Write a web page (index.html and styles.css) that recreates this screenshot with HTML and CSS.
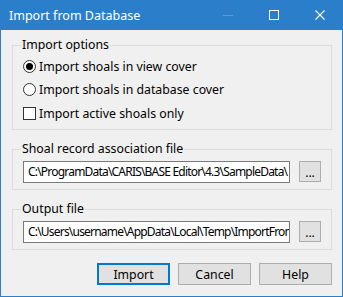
FILE: index.html
```html
<!DOCTYPE html>
<html lang="en">
<head>
    <meta charset="UTF-8">
    <title>Import from Database</title>
    <link rel="stylesheet" href="styles.css">
</head>
<body>
    <div class="window">
        <div class="titlebar">
            <span class="title">Import from Database</span>
            <div class="caption">
                <span class="cap-btn">
                    <svg width="10" height="10" viewBox="0 0 10 10"><line x1="0" y1="5.5" x2="10" y2="5.5" stroke="#5e9bd6" stroke-width="1"/></svg>
                </span>
                <span class="cap-btn">
                    <svg width="10" height="10" viewBox="0 0 10 10"><rect x="0.5" y="0.5" width="9" height="9" fill="none" stroke="#fff" stroke-width="1"/></svg>
                </span>
                <span class="cap-btn">
                    <svg width="10" height="10" viewBox="0 0 10 10"><path d="M0.5 0.5 L9.5 9.5 M9.5 0.5 L0.5 9.5" stroke="#fff" stroke-width="1.1"/></svg>
                </span>
            </div>
        </div>
        <div class="content">
            <fieldset class="group group-options">
                <legend>Import options</legend>
                <label class="option"><span class="radio checked"></span>Import shoals in view cover</label>
                <label class="option"><span class="radio"></span>Import shoals in database cover</label>
                <label class="option check-row"><span class="check"></span>Import active shoals only</label>
            </fieldset>
            <fieldset class="group">
                <legend>Shoal record association file</legend>
                <div class="file-row">
                    <div class="textbox"><span>C:\ProgramData\CARIS\BASE Editor\4.3\SampleData\</span></div>
                    <button class="browse">...</button>
                </div>
            </fieldset>
            <fieldset class="group">
                <legend>Output file</legend>
                <div class="file-row">
                    <div class="textbox"><span>C:\Users\username\AppData\Local\Temp\ImportFrom</span></div>
                    <button class="browse">...</button>
                </div>
            </fieldset>
            <div class="actions">
                <button class="btn default">Import</button>
                <button class="btn">Cancel</button>
                <button class="btn">Help</button>
            </div>
        </div>
    </div>
</body>
</html>
```

FILE: styles.css
```css
:root {
    --accent: #2b7fca;
    --face: #f0f0f0;
    --btn-face: #e1e1e1;
    --btn-border: #adadad;
    --frame: #dcdcdc;
}
* {
    box-sizing: border-box;
}
body {
    margin: 0;
    font-family: 'Noto Sans', sans-serif;
    font-size: 12.3px;
    color: #000;
    background: #fff;
}
.window {
    width: 343px;
    height: 297px;
    border: 1px solid var(--accent);
    border-top: 0;
    background: var(--face);
    display: flex;
    flex-direction: column;
}
.titlebar {
    height: 30px;
    flex: none;
    margin: 0 -1px;
    background: var(--accent);
    display: flex;
    align-items: center;
    justify-content: space-between;
    color: #fff;
}
.title {
    padding-left: 9px;
    font-size: 12.5px;
}
.caption {
    display: flex;
    height: 100%;
}
.cap-btn {
    width: 46px;
    display: flex;
    align-items: center;
    justify-content: center;
}
.cap-btn svg {
    display: block;
}
.content {
    padding: 7px 10px 0 11px;
    display: flex;
    flex-direction: column;
}
.group {
    margin: 0;
    border: 1px solid var(--frame);
    padding: 0 10px 6px 10px;
}
.group + .group {
    margin-top: 11px;
}
.group legend {
    padding: 0 1px;
    margin-left: -2px;
    line-height: 16px;
}
.group-options {
    padding-top: 2px;
    padding-bottom: 4px;
}
.option {
    display: flex;
    align-items: center;
    height: 23px;
    white-space: nowrap;
}
.radio {
    width: 13px;
    height: 13px;
    border: 1px solid #333;
    border-radius: 50%;
    background: #fff;
    margin-right: 3px;
    display: flex;
    align-items: center;
    justify-content: center;
}
.radio.checked::after {
    content: '';
    width: 7px;
    height: 7px;
    border-radius: 50%;
    background: #000;
}
.check {
    width: 13px;
    height: 13px;
    border: 1px solid #333;
    background: #fff;
    margin-right: 3px;
}
.check-row {
    margin-top: 1px;
}
.file-row {
    display: flex;
    align-items: flex-start;
    gap: 9px;
    padding-top: 4px;
}
.textbox {
    width: 267px;
    height: 22px;
    border: 1px solid #7a7a7a;
    background: #fff;
    padding: 0 3px 0 4px;
    line-height: 20px;
    white-space: nowrap;
    overflow: hidden;
    font-size: 12px;
    letter-spacing: -0.8px;
}
.browse {
    width: 22px;
    height: 21px;
    border: 1px solid var(--btn-border);
    background: var(--btn-face);
    font-family: inherit;
    font-size: 12px;
    padding: 0;
    line-height: 22px;
}
.actions {
    display: flex;
    justify-content: flex-end;
    gap: 8px;
    margin-top: 13px;
}
.btn {
    width: 73px;
    height: 22px;
    border: 1px solid var(--btn-border);
    background: var(--btn-face);
    font-family: inherit;
    font-size: 12.3px;
    padding: 0;
    color: #000;
}
.btn.default {
    border: 2px solid #0078d7;
}
```
